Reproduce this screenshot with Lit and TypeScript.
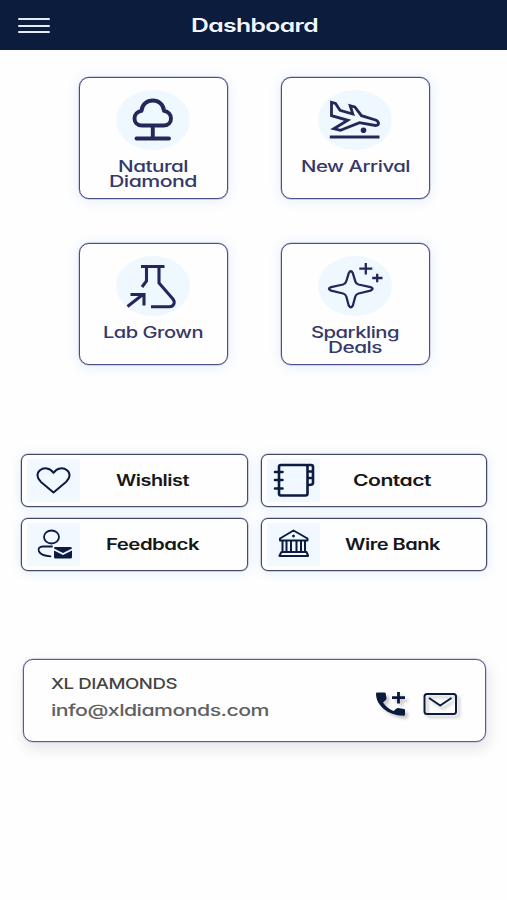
import { LitElement, html, svg, css } from "lit";
import { customElement, property } from "lit/decorators.js";

/** One line of wide-set text, stretched to an exact width. */
@customElement("wide-text")
class WideText extends LitElement {
  @property() text = "";
  @property({ type: Number }) width = 100;
  @property({ type: Number }) size = 15.5;
  static styles = css`
    :host { display: block; }
    svg { display: block; overflow: visible; }
    text { fill: currentColor; font-family: Inter, "Open Sans", sans-serif; font-feature-settings: "cv11" 1; letter-spacing: -0.025em; }
  `;
  render() {
    return html`<svg width=${this.width} height="15">
      <text x="0" y="12" font-size=${this.size} textLength=${this.width} lengthAdjust="spacingAndGlyphs">${this.text}</text>
    </svg>`;
  }
}

type Line = [string, number];

const tree = svg`<g stroke-width="3.900" stroke-linecap="round" stroke-linejoin="round">
  <path d="M26 35.500C21 35.500 18.500 32 18.500 28.500C18.500 24.500 21.500 21.500 25.500 20.800C26 14.500 31 10.500 36.800 10.500C42.500 10.500 47.500 14.500 48 20.800C52 21.500 55 24.500 55 28.500C55 32 52.500 35.500 47.500 35.500Z"/>
  <path d="M36.800 36V48M20.500 48.500H53"/></g>`;

const plane = svg`<g stroke-width="2.800" stroke-linejoin="miter">
  <path d="M13.500 12.300L17.500 13.500L22 20.300L34.800 24L32.200 15.700L36.800 17L43.500 25.700L57.500 30C61.500 31.500 61.500 35.500 57.500 35.500L41.500 32.700L22.500 40.300L15.800 38.700L29.800 30.300L13.500 25.700Z"/>
  <path d="M11.800 47H61.500"/><circle cx="45.500" cy="40.300" r="2.800" fill="currentColor" stroke="none"/></g>`;

const flask = svg`<g stroke-width="3.100">
  <path d="M25 10.500H48.500M30.500 11V25L26 31M43 11V27L56.500 42.500C60 46.500 57.500 50.700 53.500 50.700H35"/>
  <path d="M11.500 50.500L27.500 38M14.500 38.500H28V49.500"/></g>`;

const sparkle = svg`<g stroke-width="2.300" stroke-linejoin="round">
  <path d="M30.800 17Q32.800 13.500 34.800 17L37.300 25.300Q38 27.800 40.500 28.500L52.500 31.200Q56.800 32.800 52.500 34.600L40.500 37.500Q38 38.300 37.300 40.500L34.800 49.700Q32.800 53 30.800 49.700L28.300 40.500Q27.600 38.300 25.100 37.500L13.100 34.600Q8.800 32.800 13.100 31.200L25.100 28.500Q27.600 27.800 28.300 25.300Z"/>
  <path d="M47.800 7V18.500M41.300 12.700H54.300M59.200 17.800V26.300M54.200 22H64.500"/></g>`;

const heart = svg`<path stroke-width="2" stroke-linejoin="round" d="M26.500 33.500L14 23C9.500 19 9.500 14 13 11.200C17 8 23 9 26.500 13.800C30 9 36 8 40 11.200C43.500 14 43.500 19 39 23Z"/>`;

const notebook = svg`<g stroke-width="2.600" stroke-linejoin="round" stroke-linecap="round">
  <rect x="12" y="6" width="28.500" height="30.500" rx="2"/>
  <path d="M40 6H44Q46 6 46 8V24Q46 26 41.500 26M41.500 12.500H45M41.500 19H45M8 13H15.500M8 21H15.500M8 29.500H15.500"/></g>`;

const person = svg`<g stroke-width="1.800" stroke-linecap="round">
  <ellipse cx="24.500" cy="14" rx="7.500" ry="6.500"/>
  <path d="M25 23.500H16C12.500 23.500 10.500 25.500 12 28.500C13.500 31.500 17.500 33 23.500 33.300"/></g>
  <path stroke="none" fill="currentColor" d="M28 24H43.500Q45 24 45 25.500L36 30L27 25.500Q27 24 28 24ZM27 27.500L36 32L45 27.500V34Q45 35.500 43.500 35.500H28.500Q27 35.500 27 34Z"/>`;

const bank = svg`<g stroke-width="2" stroke-linejoin="round">
  <path d="M13 17.500V15.500L26.500 7.500L40.500 15.500V17.500ZM15.500 18V28.500M19.500 18V28.500M24 18V28.500M29.500 18V28.500M34 18V28.500M38 18V28.500M14.500 29H39.500L41 32.500V33H12.500V32.500Z"/>
  <circle cx="26.500" cy="13" r="1" fill="currentColor" stroke-width="1"/></g>`;

@customElement("category-card")
class CategoryCard extends LitElement {
  @property({ attribute: false }) icon: unknown;
  @property({ attribute: false }) lines: Line[] = [];
  static styles = css`
    :host {
      display: flex; flex-direction: column; align-items: center;
      box-sizing: border-box; width: 149px; height: 122px; padding-top: 12px;
      border: 1px solid #4c4f85; border-radius: 10px; background: #fefefe;
      box-shadow: 0 0 0 .5px #aaabc6, 0 1px 14px 2px #e9f2fd; color: #242759;
    }
    .disc { width: 74px; height: 60px; border-radius: 50%; background: #f0f8ff; margin: 0 1px 9.700px 0; }
    .disc svg { display: block; fill: none; stroke: currentColor; overflow: visible; }
    wide-text { height: 15.500px; margin-right: 1px; color: #36386a; font-weight: 500; }
  `;
  render() {
    return html`<div class="disc"><svg width="74" height="60">${this.icon}</svg></div>
      ${this.lines.map(([t, w]) => html`<wide-text .text=${t} .width=${w}></wide-text>`)}`;
  }
}

@customElement("action-button")
class ActionButton extends LitElement {
  @property({ attribute: false }) icon: unknown;
  @property({ attribute: false }) line: Line = ["", 0];
  static styles = css`
    :host {
      display: flex; align-items: center; box-sizing: border-box; height: 53px; padding-left: 5px;
      border: 1px solid #414767; border-radius: 7px; background: #fefefe;
      box-shadow: 0 0 0 .5px #a4a8b9, 0 1px 12px 2px #e9f2fd; color: #0b1b42;
    }
    .tile { width: 53px; height: 43px; background: #f1f8ff; }
    .tile svg { display: block; fill: none; stroke: currentColor; overflow: visible; }
    .label { flex: 1; display: flex; justify-content: center; padding: 1px 22px 0 0; color: #171717; font-weight: 600; }
  `;
  render() {
    return html`<div class="tile"><svg width="53" height="43">${this.icon}</svg></div>
      <div class="label"><wide-text .text=${this.line[0]} .width=${this.line[1]}></wide-text></div>`;
  }
}

@customElement("app-root")
class AppRoot extends LitElement {
  static styles = css`
    :host { display: block; box-sizing: border-box; height: 900px; overflow: hidden; background: #fefefe; font-family: Inter, sans-serif; }
    header {
      display: grid; grid-template-columns: 1fr auto 1fr; align-items: center;
      height: 49.500px; padding: 2px 16px 0 18px; box-sizing: border-box; background: #0b1c3d; color: #f4f6ff;
    }
    .menu { display: flex; flex-direction: column; gap: 4.300px; width: 32px; }
    .menu i { height: 2.300px; border-radius: 1px; background: #e6ebfa; }
    header wide-text { font-weight: 600; padding-top: 4px; }
    .cards { display: grid; grid-template-columns: 149px 149px; gap: 44px 53px; justify-content: center; padding: 27.500px 0 0 2px; }
    .actions { display: grid; grid-template-columns: 227px 226px; gap: 11px 13px; padding: 89px 0 0 21px; }
    .contact {
      display: flex; box-sizing: border-box; width: 463px; height: 83px; margin: 87.500px 0 0 22.500px; padding: 17.500px 27px 0 27.500px;
      border: 1px solid #5b5b94; border-radius: 10px; background: #fefefe; box-shadow: 0 0 0 .5px #b2b2cc, 2px 6px 14px 1px #e6e6ea;
    }
    .who { flex: 1; display: flex; flex-direction: column; gap: 11.500px; font-weight: 500; color: #444; }
    .mail { color: #606060; }
    .links { display: flex; gap: 17px; padding-top: 14px; margin-right: 1px; color: #0b1b3e; }
    .links svg { display: block; overflow: visible; filter: drop-shadow(3px 3px 1.500px #c8c8c8); }
  `;
  render() {
    return html`
      <header>
        <div class="menu"><i></i><i></i><i></i></div>
        <wide-text text="Dashboard" .width=${127} .size=${18}></wide-text>
      </header>
      <div class="cards">
        <category-card .icon=${tree} .lines=${[["Natural", 70], ["Diamond", 88]]}></category-card>
        <category-card .icon=${plane} .lines=${[["New Arrival", 109]]}></category-card>
        <category-card .icon=${flask} .lines=${[["Lab Grown", 100]]}></category-card>
        <category-card .icon=${sparkle} .lines=${[["Sparkling", 88], ["Deals", 54]]}></category-card>
      </div>
      <div class="actions">
        <action-button .icon=${heart} .line=${["Wishlist", 73]}></action-button>
        <action-button .icon=${notebook} .line=${["Contact", 78]}></action-button>
        <action-button .icon=${person} .line=${["Feedback", 93]}></action-button>
        <action-button .icon=${bank} .line=${["Wire Bank", 95]}></action-button>
      </div>
      <div class="contact">
        <div class="who">
          <wide-text text="XL DIAMONDS" .width=${126} .size=${15.2}></wide-text>
          <wide-text class="mail" text="info@xldiamonds.com" .width=${218} .size=${15.8}></wide-text>
        </div>
        <div class="links">
          <svg width="30" height="26" fill="none" stroke="currentColor">
            <path stroke="none" fill="currentColor" d="M1 1.500H8.500Q9.500 1.500 9.700 2.500L10.500 7.300Q10.600 8.200 10 8.800L7 11.500C9.500 15.500 13 18 17.500 20L20.500 17.500Q21.200 17 22 17.100L28 18Q29 18.200 29 19V23.500Q29 24.700 27.500 24.700C11.500 24.500 0 14 0 2.700Q0 1.500 1 1.500Z"/>
            <path stroke-width="2.800" d="M22.500 1V12.500M16 6.700H29"/>
          </svg>
          <svg width="34" height="26" fill="none" stroke="currentColor" stroke-width="2" stroke-linejoin="round">
            <rect x="1.500" y="3" width="31.500" height="20" rx="2.500"/>
            <path d="M6 7L17.200 14.500L28.500 7"/>
          </svg>
        </div>
      </div>`;
  }
}
